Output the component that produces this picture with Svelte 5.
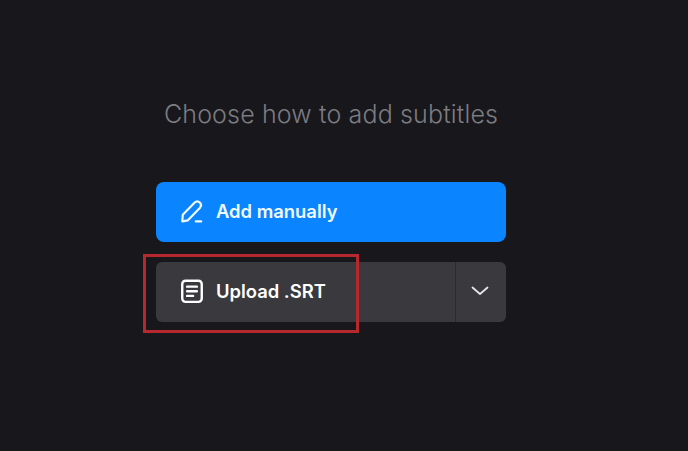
<script>
    let title = "Choose how to add subtitles";
</script>

<div class="page">
    <h2>{title}</h2>

    <button class="btn primary">
        <svg width="26" height="26" viewBox="0 0 24 24" fill="none" stroke="currentColor" stroke-width="2" stroke-linecap="round" stroke-linejoin="round">
            <path d="M3.5 15.5 14.5 4.2a3.4 3.4 0 0 1 4.9 4.7L8.2 20.6 3 21.6Z" />
            <path d="M15.5 21.6h5" />
        </svg>
        <span>Add manually</span>
    </button>

    <div class="split">
        <button class="btn upload">
            <svg width="26" height="26" viewBox="0 0 24 24" fill="none" stroke="currentColor" stroke-width="2.2" stroke-linecap="round" stroke-linejoin="round">
                <rect x="3" y="2.5" width="18" height="19.5" rx="3" />
                <path d="M7.5 8h9M7.5 12.2h9M7.5 16.5h5.5" />
            </svg>
            <span>Upload .SRT</span>
        </button>
        <button class="more" aria-label="More options">
            <svg width="18" height="10" viewBox="0 0 18 10" fill="none" stroke="currentColor" stroke-width="1.8" stroke-linecap="round" stroke-linejoin="round">
                <path d="M1.5 1.5 9 8l7.5-6.5" />
            </svg>
        </button>
        <div class="highlight"></div>
    </div>
</div>

<style>
    :global(body) {
        margin: 0;
        background: #17171c;
    }

    .page {
        box-sizing: border-box;
        width: 688px;
        height: 451px;
        padding: 100px 182px 0 156px;
        display: flex;
        flex-direction: column;
        font-family: Inter, "Liberation Sans", sans-serif;
        overflow: hidden;
    }

    h2 {
        margin: 0 0 53px;
        height: 29px;
        line-height: 29px;
        font-size: 25px;
        font-weight: 300;
        letter-spacing: 0.15px;
        color: #7c7c81;
        text-align: center;
        white-space: nowrap;
    }

    .btn {
        display: flex;
        align-items: center;
        gap: 11px;
        height: 60px;
        padding: 0 0 2px 23px;
        border: 0;
        color: #fff;
        font: 600 18.4px Inter, "Liberation Sans", sans-serif;
    }

    .primary {
        width: 350px;
        border-radius: 8px;
        background: #0a85ff;
        color: #f2f9ff;
    }

    .split {
        position: relative;
        display: flex;
        width: 350px;
        height: 60px;
        margin-top: 20px;
        border-radius: 6px;
        background: #39393e;
    }

    .upload {
        flex: 1;
        background: none;
    }

    .more {
        width: 51px;
        display: flex;
        align-items: center;
        justify-content: center;
        padding: 0 2px 2px 0;
        background: none;
        border: 0;
        border-left: 1px solid #2a2a2f;
        color: #e6e6e8;
    }

    .highlight {
        position: absolute;
        left: -13px;
        top: -8px;
        width: 210px;
        height: 73px;
        border: 3px solid #b5282e;
        pointer-events: none;
    }
</style>
